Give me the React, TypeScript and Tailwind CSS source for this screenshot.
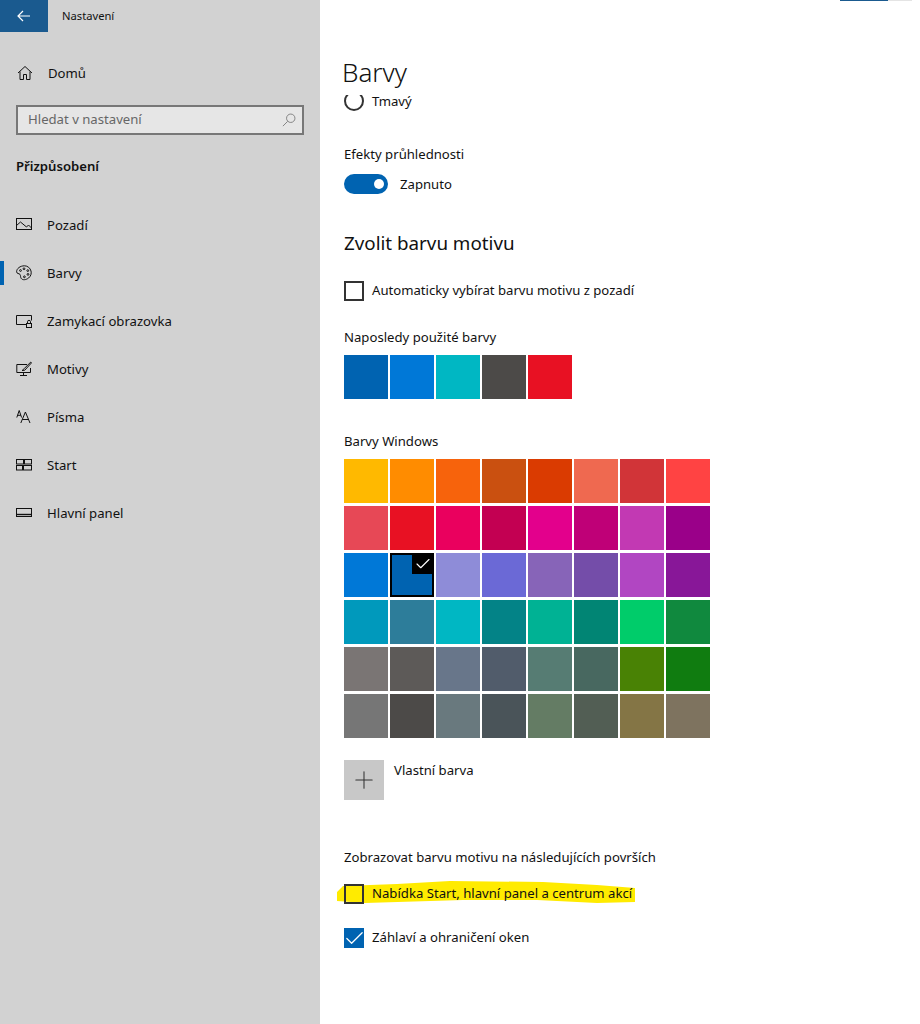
import { Check, Plus } from "lucide-react";

const recentColors = ["#0063b1", "#0078d7", "#00b7c3", "#4c4a48", "#e81123"];

const windowsColors = [
  "#ffb900", "#ff8c00", "#f7630c", "#ca5010", "#da3b01", "#ef6950", "#d13438", "#ff4343",
  "#e74856", "#e81123", "#ea005e", "#c30052", "#e3008c", "#bf0077", "#c239b3", "#9a0089",
  "#0078d7", "#0063b1", "#8e8cd8", "#6b69d6", "#8764b8", "#744da9", "#b146c2", "#881798",
  "#0099bc", "#2d7d9a", "#00b7c3", "#038387", "#00b294", "#018574", "#00cc6a", "#10893e",
  "#7a7574", "#5d5a58", "#68768a", "#515c6b", "#567c73", "#486860", "#498205", "#107c10",
  "#767676", "#4c4a48", "#69797e", "#4a5459", "#647c64", "#525e54", "#847545", "#7e735f",
];

const SELECTED = 17;

function Glyph({ children }: { children: React.ReactNode }) {
  return (
    <svg
      viewBox="0 0 16 16"
      fill="none"
      stroke="#111"
      strokeWidth="1"
      className="h-4 w-4 shrink-0"
    >
      {children}
    </svg>
  );
}

const navItems: { label: string; left: string; icon: React.ReactNode }[] = [
  {
    label: "Pozadí",
    left: "ml-[16px]",
    icon: (
      <>
        <rect x="0.5" y="1.5" width="15" height="11" />
        <path d="M0.5 8.5 L4.5 5 L10.5 10 L12.5 8 L15.5 11" />
      </>
    ),
  },
  {
    label: "Barvy",
    left: "ml-[16px]",
    icon: (
      <>
        <path d="M8.5 .8 C4 .8 .6 3.6 .6 6.8 C.6 8.8 3.2 8.4 4 9.4 C4.8 10.6 4.2 12 5.2 13.4 C6.6 15.4 10 15 12.6 13 C15 11 15.6 8.4 15 6 C14.2 3 11.6 .8 8.5 .8 Z" />
        <circle cx="4.5" cy="5.5" r="0.9" />
        <circle cx="8" cy="3.8" r="0.9" />
        <circle cx="11.8" cy="5.6" r="0.9" />
        <circle cx="12" cy="9.4" r="0.9" />
        <circle cx="8.4" cy="11.8" r="0.9" />
      </>
    ),
  },
  {
    label: "Zamykací obrazovka",
    left: "ml-[16px]",
    icon: (
      <>
        <path d="M10 11.5 H0.5 V2.5 H15.5 V7.5" />
        <rect x="10.5" y="10.5" width="5" height="4" />
        <path d="M11.5 10.5 V8.8 A1.5 1.5 0 0 1 14.5 8.8 V10.5" />
      </>
    ),
  },
  {
    label: "Motivy",
    left: "ml-[16px]",
    icon: (
      <>
        <path d="M11 3.5 H0.8 V11.5 H14.5 V7" />
        <path d="M7.5 11.5 V14 M4 14.5 H11" />
        <path d="M14.8 1 L8.6 7.2 L6 9.6 L8.8 9.2 L15.4 2 Z" />
      </>
    ),
  },
  {
    label: "Písma",
    left: "ml-[16px]",
    icon: (
      <>
        <path d="M0.8 8.5 L3.2 1.5 L5.6 8.5 M1.6 6.3 H4.8" />
        <path d="M4.8 14 L9.4 3 L14 14 M6.3 10.5 H12.5" />
      </>
    ),
  },
  {
    label: "Start",
    left: "ml-[16px]",
    icon: (
      <>
        <rect x="0.5" y="2.5" width="7" height="4.5" />
        <rect x="8.5" y="2.5" width="7" height="4.5" />
        <rect x="0.5" y="8.5" width="6" height="4.5" />
        <rect x="7.5" y="8.5" width="8" height="4.5" />
      </>
    ),
  },
  {
    label: "Hlavní panel",
    left: "ml-[16px]",
    icon: (
      <>
        <rect x="0.5" y="3.5" width="15" height="8" />
        <path d="M0.5 9.5 H15.5" strokeWidth="1.4" />
      </>
    ),
  },
];

function Swatch({ color, selected }: { color: string; selected?: boolean }) {
  if (!selected) {
    return <div className="h-11 w-11" style={{ backgroundColor: color }} />;
  }
  return (
    <div
      className="relative h-11 w-11 border-2 border-black"
      style={{ backgroundColor: color }}
    >
      <div className="absolute -top-0.5 -right-0.5 flex h-[21px] w-[22px] items-center justify-center bg-black">
        <Check size={18} strokeWidth={1.5} className="text-white" />
      </div>
    </div>
  );
}

function Checkbox({ label, checked }: { label: string; checked?: boolean }) {
  return (
    <div className="relative z-10 flex h-5 items-center gap-2">
      {checked ? (
        <div className="flex h-5 w-5 items-center justify-center bg-[#0063b1]">
          <Check size={23} strokeWidth={1.3} className="shrink-0 text-white" />
        </div>
      ) : (
        <div className="h-5 w-5 border-2 border-[#333]" />
      )}
      <span className="pb-0.5">{label}</span>
    </div>
  );
}

export default function App() {
  return (
    <div className="flex h-[1024px] w-[920px] overflow-hidden bg-white font-['Noto_Sans','Open_Sans',sans-serif] text-[13.15px] leading-5 text-[#111]">
      {/* Levý panel */}
      <aside className="w-80 shrink-0 bg-[#d2d2d2]">
        <div className="flex h-8 items-center">
          <div className="flex h-8 w-12 items-center justify-center bg-[#1a5a8f]">
            <svg viewBox="0 0 14 12" fill="none" stroke="#fff" strokeWidth="1.2" className="h-3 w-3.5">
              <path d="M13 6 H1 M6 1 L1 6 L6 11" />
            </svg>
          </div>
          <span className="ml-3.5 text-[11.2px]">Nastavení</span>
        </div>

        <div className="mt-[31px] flex h-5 items-center">
          <div className="ml-[17px]">
            <Glyph>
              <path d="M1 8 L8 1.5 L15 8 M3 6.5 V14.5 H6.5 V9.5 H9.5 V14.5 H13 V6.5" />
            </Glyph>
          </div>
          <span className="ml-[15px]">Domů</span>
        </div>

        <div className="mx-4 mt-[22px] flex h-[30px] items-center justify-between border-2 border-[#777] bg-[#e6e6e6] pr-1.5 pl-2.5 text-[#666]">
          <span className="pb-0.5">Hledat v nastavení</span>
          <svg viewBox="0 0 16 16" fill="none" stroke="#777" strokeWidth="1" className="h-3.5 w-3.5">
            <circle cx="10" cy="6" r="4.8" />
            <path d="M6.5 9.5 L1 15" />
          </svg>
        </div>

        <div className="mt-[21px] ml-4 font-semibold">Přizpůsobení</div>

        <nav className="mt-[25px]">
          {navItems.map((item) => (
            <div key={item.label} className="relative flex h-12 items-center">
              {item.label === "Barvy" && (
                <div className="absolute top-3 left-0 h-6 w-1 bg-[#0063b1]" />
              )}
              <div className={item.left}>
                <Glyph>{item.icon}</Glyph>
              </div>
              <span className="ml-[15px]">{item.label}</span>
            </div>
          ))}
        </nav>
      </aside>

      {/* Obsah */}
      <main className="relative flex-1 pl-6">
        <div className="absolute top-0 left-[520px] flex">
          <div className="h-px w-12 bg-[#1a5a8f]" />
          <div className="h-px w-6 bg-[#e4e4e4]" />
        </div>

        <h1 className="mt-[52px] -ml-0.5 h-[43px] text-[26px] leading-10 font-light">Barvy</h1>

        <div className="flex h-4 items-start gap-2">
          <div className="h-4 w-5 shrink-0 overflow-hidden">
            <div className="-mt-1 h-5 w-5 rounded-full border-2 border-[#333]" />
          </div>
          <span className="-mt-1">Tmavý</span>
        </div>

        <div className="mt-[33px]">Efekty průhlednosti</div>
        <div className="mt-2.5 flex h-5 items-center gap-3">
          <div className="flex h-5 w-11 items-center justify-end rounded-full bg-[#0063b1] pr-1">
            <div className="h-2.5 w-2.5 rounded-full bg-white" />
          </div>
          <span>Zapnuto</span>
        </div>

        <h2 className="mt-[35px] text-[18.8px] leading-7 font-normal">Zvolit barvu motivu</h2>

        <div className="mt-6">
          <Checkbox label="Automaticky vybírat barvu motivu z pozadí" />
        </div>

        <div className="mt-[26px]">Naposledy použité barvy</div>
        <div className="mt-2 flex gap-0.5">
          {recentColors.map((color) => (
            <Swatch key={color} color={color} />
          ))}
        </div>

        <div className="mt-8">Barvy Windows</div>
        <div className="mt-2 grid w-[366px] grid-cols-8 gap-x-0.5 gap-y-[3px]">
          {windowsColors.map((color, index) => (
            <Swatch key={index} color={color} selected={index === SELECTED} />
          ))}
        </div>

        <div className="mt-[22px] flex items-start gap-2.5">
          <div className="flex h-10 w-10 items-center justify-center bg-[#c8c8c8]">
            <Plus size={28} strokeWidth={0.9} className="text-[#333]" />
          </div>
          <span>Vlastní barva</span>
        </div>

        <div className="mt-[47px]">Zobrazovat barvu motivu na následujících površích</div>

        <div className="relative mt-[17px]">
          <svg
            viewBox="0 0 300 24"
            className="absolute -top-[3px] -left-[7px] h-6 w-[300px]"
          >
            <path
              d="M0 11 L6 5 L60 3 L113 0 L206 1 L260 4 L298 7 L298 21 L260 22 L200 19 L126 19 L28 22 L0 20 Z"
              fill="#ffeb00"
            />
          </svg>
          <Checkbox label="Nabídka Start, hlavní panel a centrum akcí" />
        </div>

        <div className="mt-6">
          <Checkbox label="Záhlaví a ohraničení oken" checked />
        </div>
      </main>
    </div>
  );
}
